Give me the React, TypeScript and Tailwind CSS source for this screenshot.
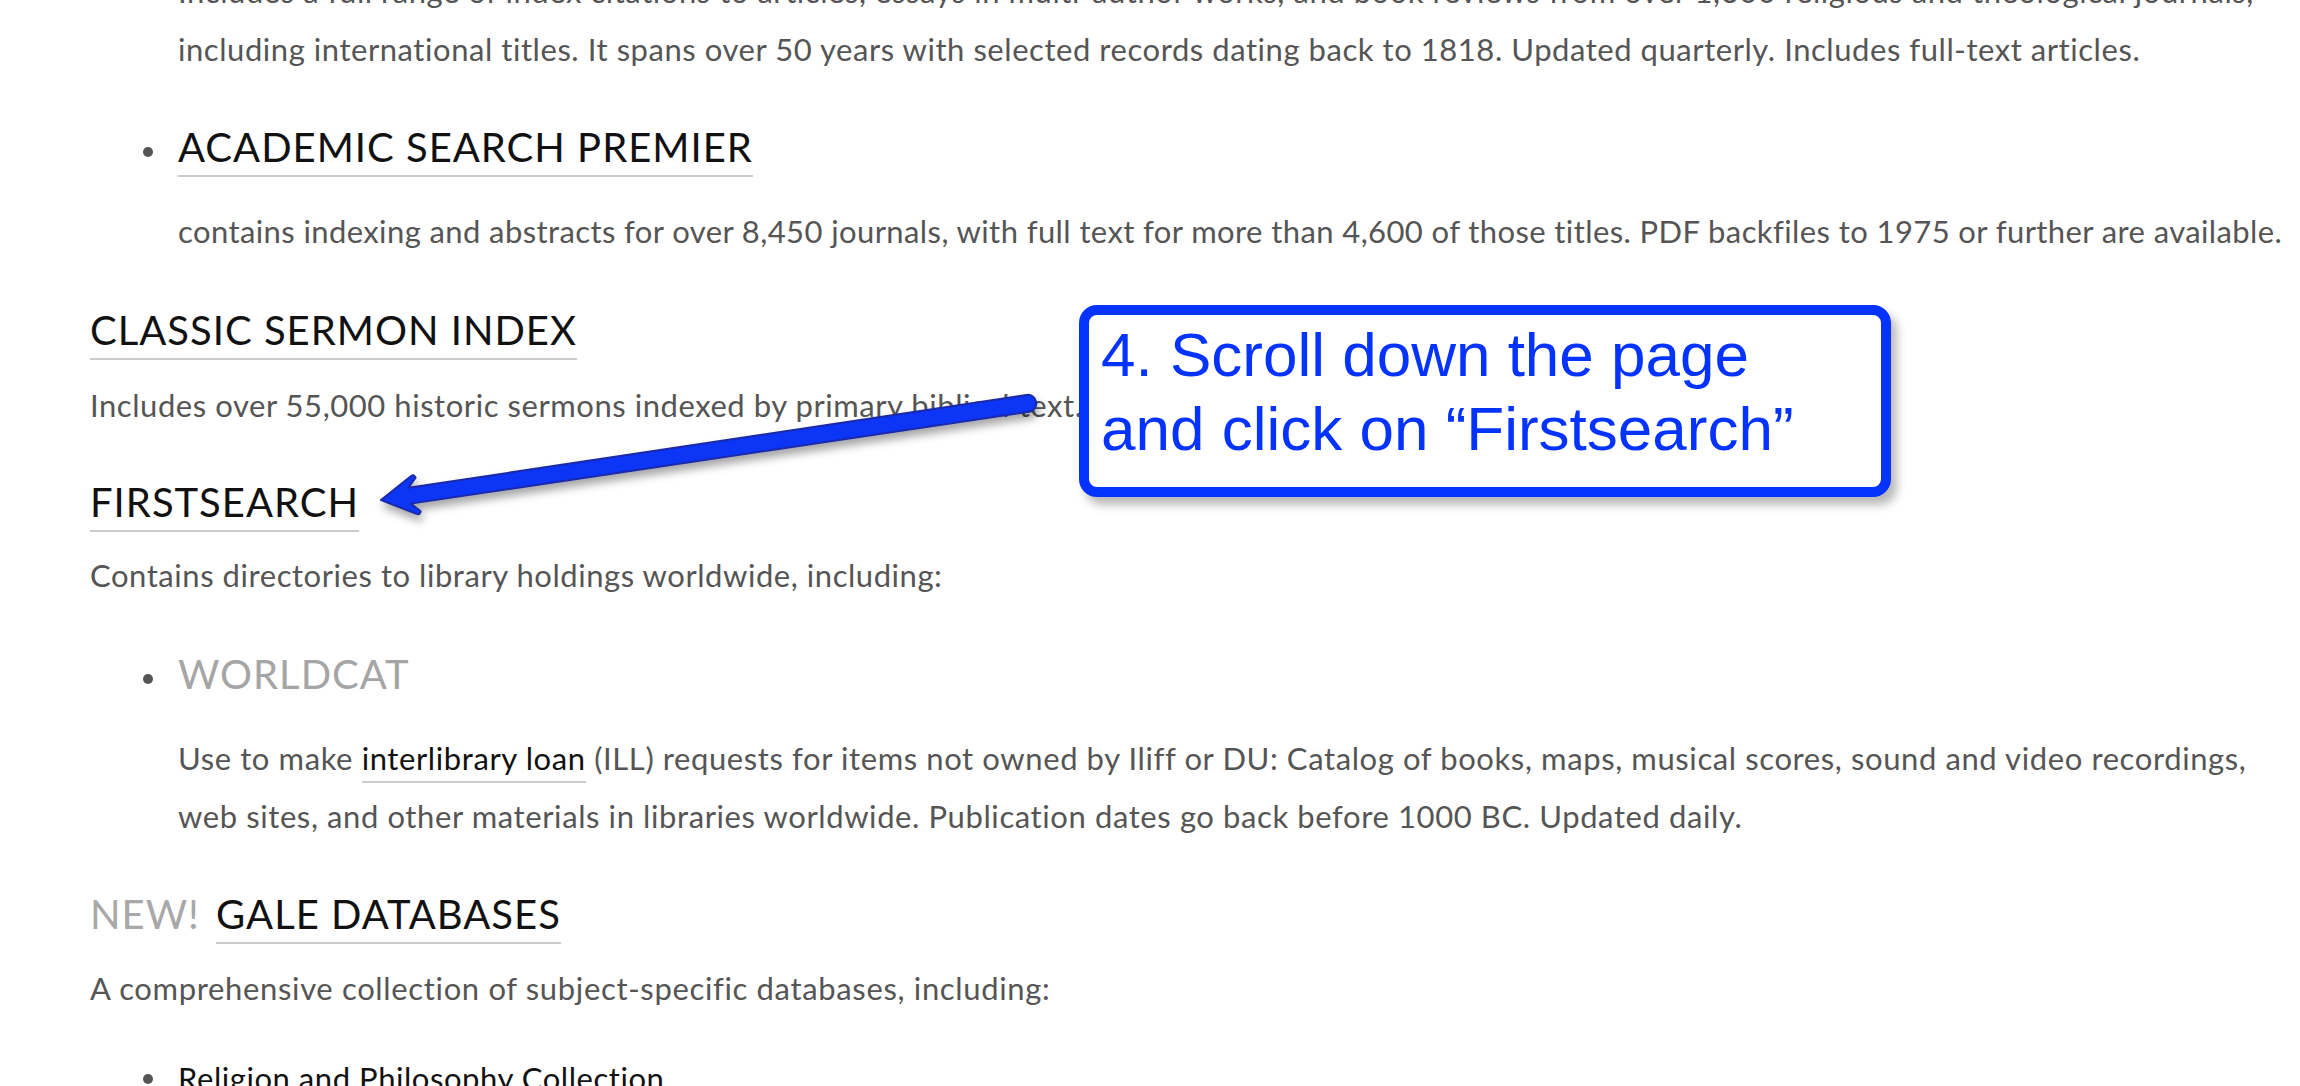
import React from 'react';

const bodyText = "font-['Lato',sans-serif] text-[31px] leading-[58px] text-[#555] whitespace-nowrap";
const headingText = "font-['Lato',sans-serif] text-[40px] leading-[40px] tracking-[1px] uppercase whitespace-nowrap";

type HeadingProps = {
  label: string;
  prefix?: string;
  muted?: boolean;
  underline?: boolean;
};

function Heading({ label, prefix, muted = false, underline = true }: HeadingProps) {
  return (
    <div className={`${headingText} text-[#111]`}>
      {prefix && <span className="text-[#a8a8a8] mr-[5px]">{prefix} </span>}
      <a
        href="#"
        className={`inline-block pb-[8px] border-b-2 ${underline ? 'border-[#cccccc]' : 'border-transparent'} ${
          muted ? 'text-[#a5a5a5]' : 'text-[#111]'
        }`}
      >
        {label}
      </a>
    </div>
  );
}

// list row: dot in the gutter, content indented to the list column
function ListRow({ dotOffset, className = '', children }: { dotOffset: string; className?: string; children: React.ReactNode }) {
  return (
    <div className={`flex ${className}`}>
      <div className="w-[88px] shrink-0 flex justify-end pr-[25px]">
        <span className={`${dotOffset} w-[10px] h-[10px] rounded-full bg-[#555]`} />
      </div>
      <div className="flex-1">{children}</div>
    </div>
  );
}

function Arrow() {
  return (
    <svg className="absolute left-0 top-0 pointer-events-none" width="2300" height="1086" viewBox="0 0 2300 1086">
      <defs>
        <filter id="arrowShadow" x="-10%" y="-60%" width="120%" height="220%">
          <feDropShadow dx="2" dy="6" stdDeviation="4" floodColor="#000" floodOpacity="0.35" />
        </filter>
      </defs>
      <g filter="url(#arrowShadow)">
        <g transform="translate(381 500) rotate(-8.5)">
          <path
            d="M0,0 L33,-19 Q36.5,-21 37.5,-17 L29,-8 L654,-8.5 A8.5,8.5 0 0 1 654,8.5 L29,8 L37.5,17 Q36.5,21 33,19 Z"
            fill="#0a35f5"
            stroke="#1a2aa8"
            strokeWidth="2"
            strokeLinejoin="round"
          />
        </g>
      </g>
    </svg>
  );
}

export default function App() {
  return (
    <div className="relative w-[2300px] h-[1086px] overflow-hidden bg-white">
      <div className="pl-[90px] mt-[-38px]">
        {/* tail of the previous entry */}
        <div className={`pl-[88px] tracking-[0.55px] ${bodyText}`}>
          Includes a full range of index citations to articles, essays in multi-author works, and book reviews from over 1,600 religious and theological journals,
          <br />
          including international titles. It spans over 50 years with selected records dating back to 1818. Updated quarterly. Includes full-text articles.
        </div>

        <ListRow dotOffset="mt-[20px]" className="mt-[49px]">
          <Heading label="Academic Search Premier" />
          <p className={`mt-[25px] tracking-[0.4px] ${bodyText}`}>
            contains indexing and abstracts for over 8,450 journals, with full text for more than 4,600 of those titles. PDF backfiles to 1975 or further are available.
          </p>
        </ListRow>

        <div className="mt-[50px]">
          <Heading label="Classic Sermon Index" />
        </div>
        <p className={`mt-[16px] tracking-[0.55px] ${bodyText}`}>Includes over 55,000 historic sermons indexed by primary biblical text.</p>

        <div className="mt-[48px]">
          <Heading label="Firstsearch" />
        </div>
        <p className={`mt-[14px] tracking-[0.55px] ${bodyText}`}>Contains directories to library holdings worldwide, including:</p>

        <ListRow dotOffset="mt-[20px]" className="mt-[50px]">
          <Heading label="WorldCat" muted underline={false} />
          <p className={`mt-[25px] tracking-[0.6px] ${bodyText}`}>
            Use to make{' '}
            <a href="#" className="text-[#111] border-b-2 border-[#cccccc] pb-[4px]">
              interlibrary loan
            </a>{' '}
            (ILL) requests for items not owned by Iliff or DU: Catalog of books, maps, musical scores, sound and video recordings,
            <br />
            web sites, and other materials in libraries worldwide. Publication dates go back before 1000 BC. Updated daily.
          </p>
        </ListRow>

        <div className="mt-[49px]">
          <Heading prefix="New!" label="Gale Databases" />
        </div>
        <p className={`mt-[15px] tracking-[0.65px] ${bodyText}`}>A comprehensive collection of subject-specific databases, including:</p>

        <ListRow dotOffset="mt-[25px]" className="mt-[32px]">
          <a href="#" className={`tracking-[0.55px] ${bodyText} !text-[#111]`}>
            Religion and Philosophy Collection
          </a>
        </ListRow>
      </div>

      <Arrow />

      {/* step callout */}
      <div className="absolute left-[1079px] top-[305px] w-[812px] h-[192px] rounded-[18px] border-[10px] border-[#0433ff] bg-white shadow-[6px_8px_10px_rgba(0,0,0,0.28)] pl-[12px] pt-[3px]">
        <div className="font-['Liberation_Sans',Arial,sans-serif] text-[62px] leading-[74px] text-[#0433ff] whitespace-nowrap">
          4. Scroll down the page
          <br />
          and click on “Firstsearch”
        </div>
      </div>
    </div>
  );
}
